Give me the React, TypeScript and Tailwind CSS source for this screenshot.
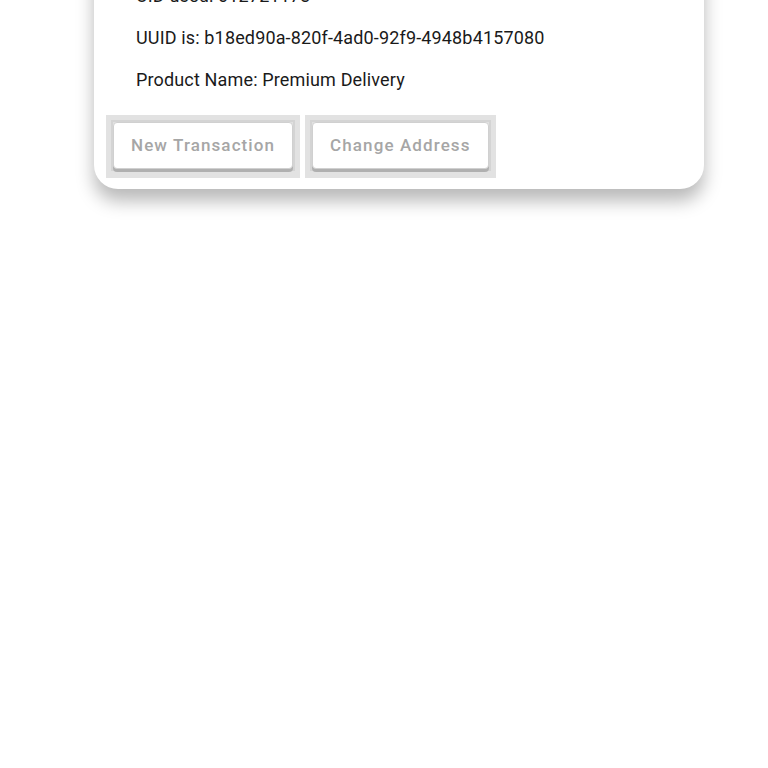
const details = [
  "UID used: 012721173",
  "UUID is: b18ed90a-820f-4ad0-92f9-4948b4157080",
  "Product Name: Premium Delivery",
];

const actions = ["New Transaction", "Change Address"];

const ActionButton = ({ label }: { label: string }) => {
  return (
    <div className="bg-[#e2e2e2] pl-[5px] pr-[5px] pt-[5px] pb-[7px]">
      <div className="border-2 border-[#d4d4d4]">
        <button className="h-[47px] px-[17px] rounded-[4px] bg-white border border-[#d0d0d0] shadow-[0_3px_0_#b0b0b0] text-[17px] font-medium tracking-[1.1px] text-[#a6a6a6] font-['Roboto',sans-serif]">
          {label}
        </button>
      </div>
    </div>
  );
};

export default function App() {
  return (
    <div className="w-[768px] h-[768px] bg-white overflow-hidden">
      <div className="ml-[94px] w-[610px] -mt-[60px] pt-[34px] pb-[11px] bg-white rounded-[24px] shadow-[0_12px_18px_rgba(0,0,0,0.28)]">
        <div className="pl-[42px] font-['Roboto',sans-serif] text-[18px] tracking-[0.15px] text-[#1a1a1a]">
          {details.map((line, i) => (
            <div key={i} className="h-[42px] flex items-center">
              {line}
            </div>
          ))}
        </div>
        <div className="flex gap-[5px] pl-[12px] mt-[15px]">
          {actions.map((a) => (
            <ActionButton key={a} label={a} />
          ))}
        </div>
      </div>
    </div>
  );
}
